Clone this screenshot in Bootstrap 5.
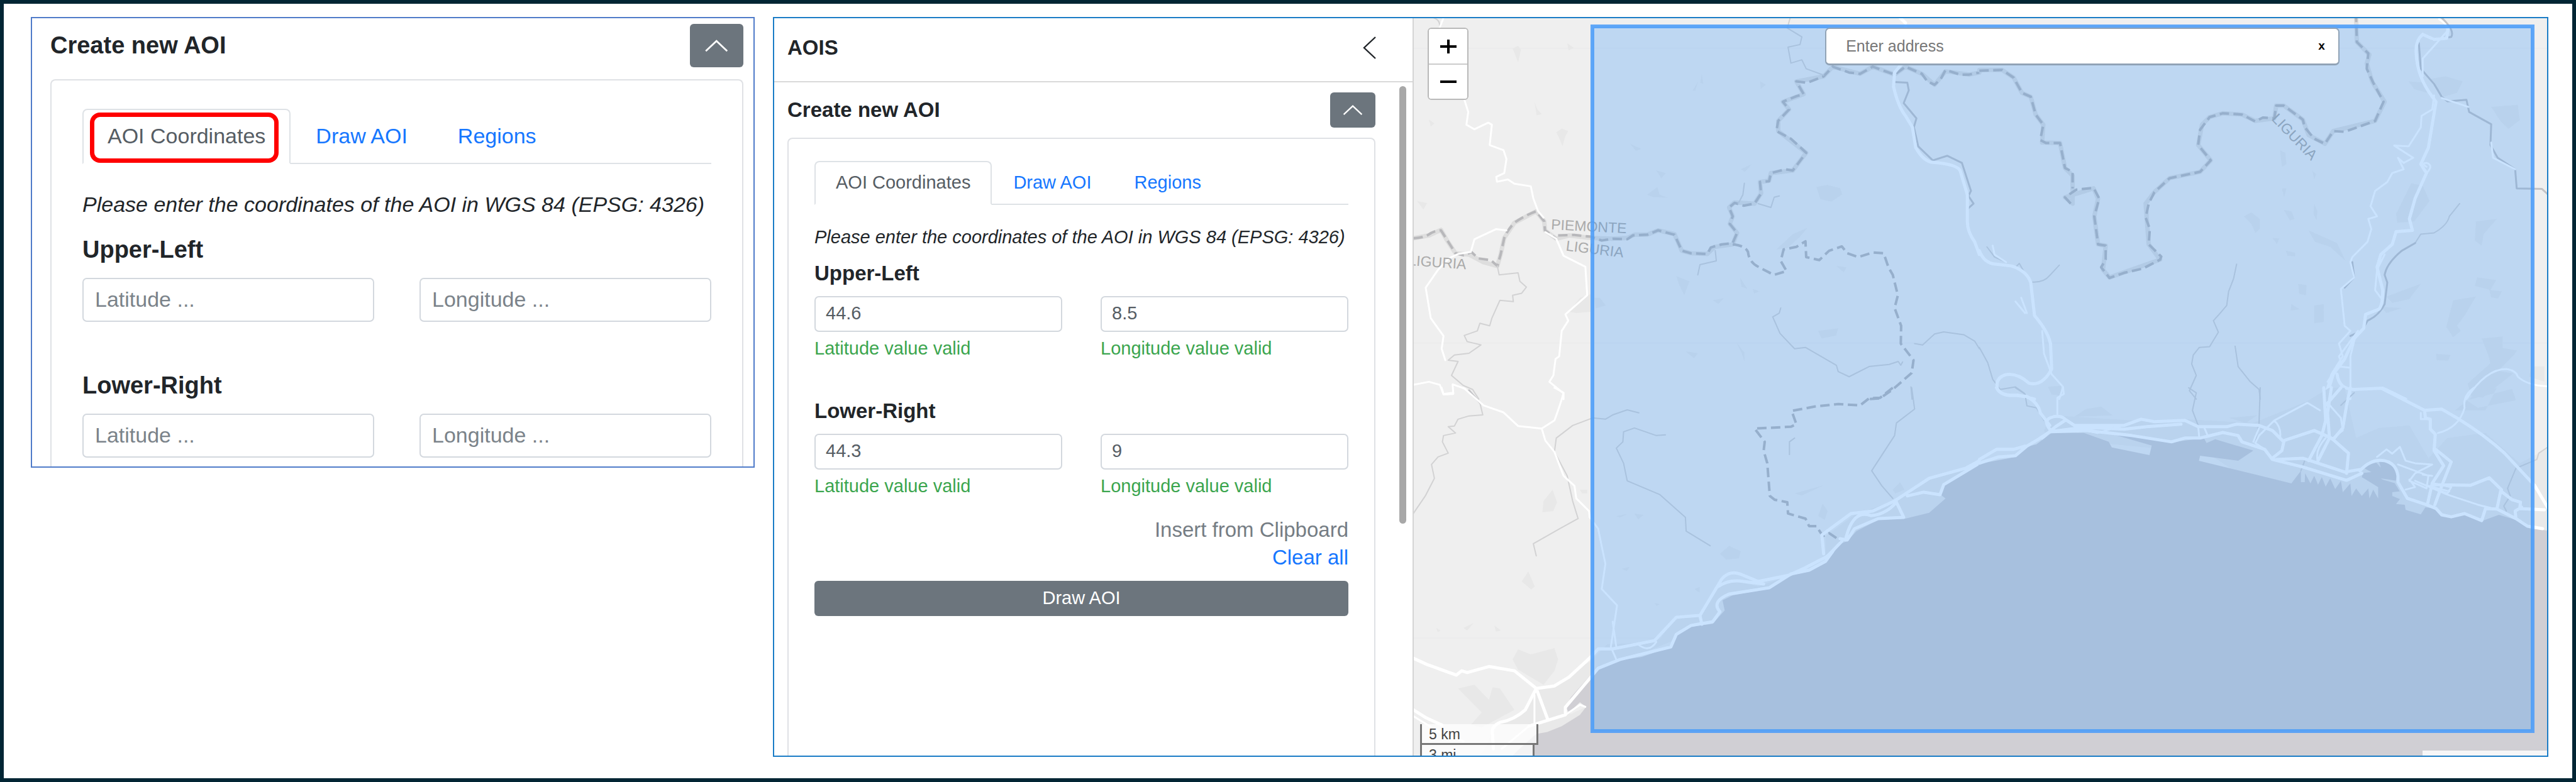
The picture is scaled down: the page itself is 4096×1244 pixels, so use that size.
<!DOCTYPE html>
<html lang="en">
<head>
<meta charset="utf-8">
<meta name="viewport" content="width=device-width, initial-scale=1">
<title>Create new AOI</title>
<link href="https://cdn.jsdelivr.net/npm/bootstrap@5.3.0/dist/css/bootstrap.min.css" rel="stylesheet">
<style>
body{font-family:"Liberation Sans",Arial,sans-serif;color:#212529;background:#fff}
.sheet{min-height:100vh;border:6px solid #022534;padding:21px 38px 34px 43px;column-gap:29px;grid-template-columns:minmax(0,1151fr) minmax(0,2823fr)}
.clip{border:2px solid #4f7bc9;padding:9px 16px 0 29px;overflow:hidden;
  --fs:34px;--hs:38px;--hl:46px;--bw:85px;--bh:69px;--cm:19px;--cp:45px 49px 14px;--tabh:88px;--tabp:38px;
  --il:50px;--im:39px;--h1:24px;--hg:22px;--ih:70px;--gap:72px;--ip:18px;--h2:78px}
.app{border:2px solid #1a7cc6;overflow:hidden;grid-template-columns:minmax(0,1017fr) minmax(0,1802fr);
  --fs:29px;--hs:33px;--hl:38px;--bw:72px;--bh:56px;--cm:16px;--cp:35px 41px 15px;--tabh:70px;--tabp:32px;
  --il:42px;--im:30px;--h1:18px;--hg:17px;--ih:57px;--gap:61px;--ip:16px;--h2:64px}
.ttl{font-size:var(--hs);line-height:var(--hl);font-weight:700;margin:0}
.clip-head .ttl{padding-top:11px}
.fold{width:var(--bw);height:var(--bh);background:#6c757d;border:0;border-radius:6px;padding:0}
.fold svg{width:50%;display:block;margin:auto}
.box{border:2px solid #dfe1e5;border-bottom:0;border-radius:8px 8px 0 0;margin-top:var(--cm);padding:var(--cp)}
.tabs{border-bottom:2px solid #dee2e6;height:var(--tabh);font-size:var(--fs)}
.tabs .nav-link{height:var(--tabh);border:2px solid transparent;margin:0;padding:0 var(--tabp);line-height:calc(var(--tabh) - 6px);border-radius:8px 8px 0 0;color:#1677ff}
.tabs .nav-link.active{color:#565d64;border-color:#dee2e6 #dee2e6 #fff;background:#fff}
.ring{position:absolute;inset:6px 19px 0 12px;border:7px solid #f00;border-radius:16px}
.note{font-style:italic;font-size:var(--fs);line-height:var(--il);margin:var(--im) 0 0;white-space:nowrap}
.h-a{margin-top:var(--h1)}
.h-b{margin-top:var(--h2)}
.pair{display:grid;grid-template-columns:1fr 1fr;column-gap:var(--gap);margin-top:var(--hg)}
.pair .form-control{height:var(--ih);font-size:var(--fs);line-height:var(--il);border:2px solid #d3d8de;border-radius:7px;padding:0 var(--ip) 2px;color:#565d64}
.pair .form-control::placeholder{color:#7b838a}
.ok{font-size:29px;line-height:34px;margin-top:9px;color:#3ba54e}
.side{border-right:2px solid #d4d4d4}
.bar{height:102px;border-bottom:2px solid #d9d9d9;padding:0 57px 6px 21px}
.back{border:0;background:none;padding:0;width:22px;height:36px;line-height:0}
.scroll{padding:16px 59px 0 21px;min-height:0}
.thumb{position:absolute;right:10px;top:6px;width:11px;height:65%;border-radius:6px;background:#a8a8a8}
.acts{font-size:33px;line-height:44px;margin-top:31px}
.acts a{color:#1677ff;text-decoration:none}
.acts .off{color:#757d84}
.go{background:#6c757d;color:#fff;font-size:29px;height:56px;line-height:40px;border:0;border-radius:6px;margin-top:15px;padding:0 0 2px}
.map{background:#efefef}
.chart{position:absolute;inset:0;width:100%;height:100%}
.chart path{fill:none;vector-effect:non-scaling-stroke;stroke-linejoin:round;stroke-linecap:round}
.chart path.sea{fill:#d0cfd4}
.chart path.port{fill:#e8e8e8}
.chart path.town{fill:#e9e9e9}
.chart path.spot{fill:#e8e8e8}
.chart path.r{stroke:#fff;stroke-width:3px}
.chart path.R{stroke:#fff;stroke-width:5px}
.chart path.w{stroke:#d2d2d3;stroke-width:2px}
.chart path.W{stroke:#c3c3c6;stroke-width:3px}
.chart path.e{stroke:#dedede;stroke-width:7px}
.chart path.b{stroke:#b8b8bb;stroke-width:4px;stroke-dasharray:15 7;stroke-linecap:butt}
.chart path.tile{stroke:#e9e9ea;stroke-width:1px}
.chart text{font-family:"Liberation Sans",Arial,sans-serif;font-size:23px;fill:#aaa}
.zoomer{position:absolute;left:22px;top:15px;width:65px;border:2px solid #b9b9b9;border-radius:6px;background:#fff;overflow:hidden}
.zoomer button{display:block;width:100%;height:55px;border:0;background:#fff;padding:0}
.zoomer button+button{border-top:2px solid #ccc;height:56px}
.zoomer svg{display:block;margin:auto}
.find{position:absolute;left:36.3%;width:45.4%;top:15px;height:60px;border:2px solid #91a3b6;border-bottom-width:3px;border-radius:7px;background:#fff;padding:0 18px 0 31px}
.find input{border:0;padding:0;font-size:25px;width:100%;outline:0;color:#333}
.find input::placeholder{color:#777}
.find button{border:0;background:none;padding:0;font-size:19px;font-weight:700;width:18px;color:#000}
.scale{position:absolute;left:10px;bottom:-16px;font-size:23px;line-height:33px;color:#444}
.scale div{border:3px solid #777;border-top:0;background:rgba(255,255,255,.75);padding-left:11px;height:33px}
.km{width:188px}.mi{width:182px}
.credit{position:absolute;right:0;bottom:0;width:11%;height:8px;background:rgba(255,255,255,.8)}
</style>
<script src="https://cdn.jsdelivr.net/npm/bootstrap@5.3.0/dist/js/bootstrap.bundle.min.js"></script>
</head>
<body>
<div class="sheet d-grid">

<section class="clip align-self-start">
  <div class="clip-head d-flex justify-content-between align-items-start">
    <h2 class="ttl">Create new AOI</h2>
    <button class="fold" type="button" aria-label="Collapse"><svg viewBox="0 0 40 22"><path d="M4 19 20 4 36 19" fill="none" stroke="#fff" stroke-width="2.6"/></svg></button>
  </div>
  <div class="box">
    <ul class="nav tabs flex-nowrap">
      <li class="nav-item position-relative"><a class="nav-link active" href="#">AOI Coordinates</a><span class="ring"></span></li>
      <li class="nav-item"><a class="nav-link" href="#">Draw AOI</a></li>
      <li class="nav-item"><a class="nav-link" href="#">Regions</a></li>
    </ul>
    <p class="note">Please enter the coordinates of the AOI in WGS 84 (EPSG: 4326)</p>
    <h3 class="ttl h-a">Upper-Left</h3>
    <div class="pair">
      <div><input class="form-control" aria-label="Upper-left latitude" placeholder="Latitude ..."></div>
      <div><input class="form-control" aria-label="Upper-left longitude" placeholder="Longitude ..."></div>
    </div>
    <h3 class="ttl h-b">Lower-Right</h3>
    <div class="pair">
      <div><input class="form-control" aria-label="Lower-right latitude" placeholder="Latitude ..."></div>
      <div><input class="form-control" aria-label="Lower-right longitude" placeholder="Longitude ..."></div>
    </div>
  </div>
</section>

<section class="app d-grid">
  <div class="side d-flex flex-column">
    <div class="bar d-flex justify-content-between align-items-center">
      <h1 class="ttl">AOIS</h1>
      <button class="back" type="button" aria-label="Back"><svg width="22" height="36" viewBox="0 0 22 36"><path d="M20 1 2 18 20 35" fill="none" stroke="#212529" stroke-width="2.4"/></svg></button>
    </div>
    <div class="scroll position-relative flex-grow-1 d-flex flex-column">
      <div class="d-flex justify-content-between align-items-center">
        <h2 class="ttl">Create new AOI</h2>
        <button class="fold" type="button" aria-label="Collapse"><svg viewBox="0 0 40 22"><path d="M4 19 20 4 36 19" fill="none" stroke="#fff" stroke-width="2.6"/></svg></button>
      </div>
      <div class="box flex-grow-1">
        <ul class="nav tabs flex-nowrap">
          <li class="nav-item"><a class="nav-link active" href="#">AOI Coordinates</a></li>
          <li class="nav-item"><a class="nav-link" href="#">Draw AOI</a></li>
          <li class="nav-item"><a class="nav-link" href="#">Regions</a></li>
        </ul>
        <p class="note">Please enter the coordinates of the AOI in WGS 84 (EPSG: 4326)</p>
        <h3 class="ttl h-a">Upper-Left</h3>
        <div class="pair">
          <div><input class="form-control" aria-label="Upper-left latitude" value="44.6"><div class="ok">Latitude value valid</div></div>
          <div><input class="form-control" aria-label="Upper-left longitude" value="8.5"><div class="ok">Longitude value valid</div></div>
        </div>
        <h3 class="ttl h-b">Lower-Right</h3>
        <div class="pair">
          <div><input class="form-control" aria-label="Lower-right latitude" value="44.3"><div class="ok">Latitude value valid</div></div>
          <div><input class="form-control" aria-label="Lower-right longitude" value="9"><div class="ok">Longitude value valid</div></div>
        </div>
        <div class="acts d-flex flex-column align-items-end"><a class="off" href="#">Insert from Clipboard</a><a href="#">Clear all</a></div>
        <button class="btn go w-100" type="button">Draw AOI</button>
      </div>
      <span class="thumb"></span>
    </div>
  </div>

  <div class="map position-relative overflow-hidden">
    <svg class="chart" viewBox="2248 29 1802 1173" preserveAspectRatio="xMidYMid slice" aria-hidden="true">
      <!-- north-west quarter -->
      <g transform="matrix(.57845 0 0 .4049 2240.3 0)">
        <path class="tile" d="M0 190H1570M0 1348H1570"/>
        <path class="spot" d="M285 190l15-10 8 15-8 50-8-30zM435 170l18 18-14 10zM345 400l8 30 12 18-14 5zM405 520l15-15 18 10-8 20-8 40-8-30zM22 790l28 8-10 25zM470 1170l30-15v70l-40 5-20-5zM55 470l15 15-10 12zM780 355l15-35-8 36zM805 290l4 40-8-5zM965 320l16 12-14 18zM608 565l30 20-14 8zM680 670l26 10-12 20zM655 765l28-30 6 30 22 12-40-3zM912 665l30-20-18 30zM1120 735l30-8 35 12 6 25-30 28-30-10zM1055 920l40-25-20 35-35 45-30 5zM735 1085l36 20-14 55-14-40zM910 1090l20 45-16-8zM835 1180l30-8-14 22zM945 1135l18 10-14 8zM1175 1045l28 5-8 20zM1125 1300l55-10-6 28-40 12zM760 1380l34 8-10 20zM900 1345l22 40v35l-8-35zM510 1170h15l16 30-28 12z"/>
        <path class="e" d="M12 936 55 925 88 903 105 945 128 995 165 1000 205 1030 243 1045 252 1000 262 935 290 875 350 830 372 870 374 905 405 938 440 925 500 935 560 938 600 935 620 922 655 922 685 905 730 920 750 985 775 995 820 998 840 970 890 960 902 915 882 880 890 850 880 815 895 795 950 800 968 760 965 715 990 710 995 680 1055 670 1092 600 1015 515 1015 475 1045 430 1028 400 1085 370 1065 320 1140 300 1165 262 1240 290 1275 262 1335 293 1365 262 1410 290 1445 333 1475 280 1540 293 1568 285"/>
        <path class="b" d="M12 936 Q35 935 50 925 70 905 88 905L108 950 128 995 150 1003 172 990 190 1015 225 1022 243 1045 252 1000 262 935Q270 905 290 875 320 845 350 830L372 870 374 905 405 938"/>
        <path class="b" d="M410 925 455 923 500 930 530 945 560 938 600 940 615 925 655 922 685 905 730 922 750 985 775 995 820 998 830 972 860 960 890 955 902 915 882 880 890 850 880 815 895 797 920 808 950 800 968 760 965 715 990 712 995 680 1035 665 1055 670 1092 600 1050 545 1010 515 1015 475 1045 430 1028 400 1065 378 1085 370 1065 320 1095 325 1140 300 1165 262 1210 285 1240 290 1275 262 1335 293 1365 262 1410 290 1425 320 1445 333 1462 310 1475 275 1515 293 1540 293 1568 285"/>
        <path class="b" d="M890 960 Q925 965 932 990 935 1030 960 1048L1003 1080 1038 1065 1022 1025 1030 980 1065 970 1090 948 1092 1010 1128 1022 1155 985 1190 968 1205 995 1235 1010 1275 992 1305 995 1318 1050 1330 1080 1344 1160 1335 1210 1353 1280 1352 1350 1387 1415 1382 1465 1330 1530 1295 1565 1260 1568"/>
        <path class="w" d="M68 70Q88 80 84 110M243 1045 248 1080 300 1072 305 1105 323 1128 310 1152 285 1160 287 1185 250 1180 228 1250 222 1280 195 1270 188 1300 152 1318 160 1342 198 1355 165 1388 125 1395 108 1415 135 1420 117 1475 150 1515 175 1530 192 1568"/>
        <path class="w" d="M1048 70 1040 110 1080 145 1075 175 1042 185 1050 248 1080 235 1092 270 1140 295M922 720 918 765 905 800M960 800 995 815 1004 775 1018 770M842 985 845 1025 800 1040 794 1080M1022 1210 1018 1230 1000 1245 1020 1310 1060 1370 1090 1365 1175 1435 1180 1460 1210 1480 1265 1440 1320 1432 1345 1420 1352 1435 1357 1422M1390 1350 1412 1355 1445 1312 1470 1304 1525 1315 1555 1340 1568 1370M1380 1520 1383 1568"/>
        <path class="W" d="M1335 322 1370 325 1374 355 1360 405 1395 465 1388 500 1400 575 1440 630 1480 612 1520 640 1545 750 1538 770 1552 800 1536 820"/>
        <path class="r" d="M84 110 95 70M152 390 163 440 158 490 180 508 218 482 228 490 222 570 260 590 268 625 262 680 240 695 242 714 272 705 290 722 335 732 342 780 355 830 370 855M375 912 405 938 425 1005 485 1048 490 1160 430 1235 438 1260 420 1300 413 1400 403 1410 397 1475 386 1500 425 1545 425 1568M268 905 240 900 180 940 170 990 135 998 110 1015 80 1060 46 1130 60 1250 95 1320 90 1370 100 1415M12 1512 55 1500 85 1512 95 1550 122 1548 120 1510 155 1528"/>
        <path class="R" d="M1350 70 1365 90M1365 108 1364 200 1355 250 1335 285 1332 340Q1345 420 1365 455L1384 500 1393 580Q1415 635 1440 638 1505 645 1515 670L1535 765V870Q1535 910 1555 950L1568 1000"/>
      </g>
      <!-- north-east quarter -->
      <g transform="matrix(.6051 0 0 .4049 3147.3 0)">
        <path class="tile" d="M0 190H1500M0 1348H1500"/>
        <path class="spot" d="M695 850l20-15 22 25v40l-12 15-10-35zM790 590l14 10 3 45-12 10zM800 825l20 5 8 30-12 6zM795 740h12l-6 35zM865 905l45 30 30 20 22 70-40-55-40-20zM770 935l18 2-6 22zM805 985l25 8v14l-20-2zM838 1115l22 5-2 40-18-6zM880 1200l25-5v70l-25 5zM875 670l10 15-5 20zM1128 320l45 5 5 40-35-15zM1185 310l40-10 45 20-15 45-35 15zM1345 420l70-8 5 60-30 35-20-30zM1305 870l55-10-35 60-5 45-18-20zM1308 1090l50 10-15 40 30 5-10 28-18-5-5-30-38-15zM1245 1180l60-15-30 75-20 40 10 20-20 25-18-40zM1320 1330l55-8v45l38 10-10 20-40 60 40 10-80 95-30-5-10-50 60-80-5-30zM1200 1390l38 5-6 22-30-2zM1070 1165l90-50-30 60-45 15zM1055 1205l55 5-40 20zM820 1195l22 20-24 5zM1095 840l40-120 30 10 18 60-40 80-45 5zM1450 1440h35v60l-40-20zM180 1520l35-5v40l-25-5zM880 800l8 30-2 35-8-25z"/>
        <path class="e" d="M0 275 60 275 90 305 112 365 135 380 148 450 168 490 165 560 212 562 225 660 245 690 245 800 225 775 300 740 312 780 302 850 312 960 332 965 325 1060 342 1090 475 1020 445 960 437 800 460 755 500 700 580 675 608 630 575 570 585 490 605 460 640 445 690 450 725 475 775 465 780 415 800 415 850 470 865 530 908 565 930 515 1040 475 1065 400 1032 320 1018 250 1025 215 992 165 990 70"/>
        <path class="b" d="M0 278 60 275 90 305 112 365 135 380 148 450 168 490 160 550 175 562 212 562 225 660 245 675 245 740"/>
        <path class="b" d="M240 800 225 775 255 745 300 738 315 780 302 850 312 960 332 965 332 1020 320 1050 342 1092 380 1072 430 1055 475 1020 478 1008 445 960 448 900 437 855 445 800 460 755 500 700 580 675 608 630 575 570 580 510 605 460 640 445 690 450 725 477 745 462 775 465 780 415 800 415 850 470 855 500 880 545 908 565 930 515 960 518 1040 475 1062 400 1035 325 1018 270 1022 210 992 165 990 70"/>
        <path class="w" d="M140 1108Q170 1110 185 1082L210 1042M95 1050 105 1035 120 1075M676 1038 668 1095 655 1145 650 1200 630 1235 615 1260 628 1305 605 1362 578 1365 562 1395 558 1430 570 1475 552 1535 570 1568M672 1360 680 1440 712 1500 735 1530 738 1568M1262 800 1235 850Q1230 885 1195 915L1160 920 1145 955M0 1365 22 1425 35 1490 55 1530 95 1520 118 1545M20 970 40 1010 70 1030"/>
        <path class="W" d="M1145 955 1110 985Q1070 1035 1065 1080L1072 1110 1065 1195Q1050 1240 1020 1260L1005 1300 975 1320M1155 170 1160 270 1195 330 1215 380 1230 398 1280 392 1287 440 1345 488 1343 570 1362 620 1408 665 1412 740 1478 742 1495 765M1215 70Q1250 120 1240 145L1190 155M980 1030 985 1090 960 1130"/>
        <path class="r" d="M1208 75Q1235 100 1228 125L1195 180 1165 230 1165 300M1215 385 1285 420M1345 560 1350 620 1408 665M1195 375 1190 430 1162 455 1160 500 1128 575 1090 572 1140 620 1115 640 1100 620 1115 665 1085 680 1072 715 1040 750 1028 810 1045 850 1022 860 1030 900 1020 950 980 1010 975 1030 985 1090 950 1135 960 1280 975 1300 945 1350 955 1400 925 1470 905 1568M35 965 40 1000 70 1030M95 1185 120 1230M110 1170 125 1230M165 1300 170 1390 190 1470 220 1520 210 1568M1175 655Q1160 640 1175 640 1195 650 1175 680M1065 1000 1045 1060 1040 1140 1055 1170M990 1310 975 1400V1568M995 1300 945 1400 950 1420 915 1500M1280 1568Q1330 1450 1385 1450 1410 1455 1415 1480 1440 1515 1495 1518M945 1440 975 1445"/>
        <path class="R" d="M1165 135 1195 155 1228 150 1232 110M1165 135Q1145 160 1148 210 1150 300 1190 380L1200 400 1180 580 1160 645 1175 680 1145 780 1130 860 1138 905 1095 910 1085 960 1055 1000 1045 1050 1060 1140Q1060 1200 1050 1215L1015 1235 1010 1290 985 1330 960 1410 930 1470 910 1568M0 985Q12 1035 45 1038L85 1045Q125 1065 135 1110L145 1240Q180 1300 187 1350L190 1450Q165 1520 130 1505 100 1465 70 1472 40 1485 48 1530 60 1560 100 1552L145 1568M940 1470Q945 1530 985 1530L1060 1525 1120 1568"/>
      </g>
      <!-- south-west quarter -->
      <g transform="matrix(.57845 0 0 .4003 2240.3 616.8)">
        <path class="tile" d="M0 995H1570"/>
        <path class="spot" d="M285 1080 300 1040 335 1060 400 1035 410 1080 400 1125 370 1180 300 1120ZM135 1195 180 1180 220 1240 230 1190 250 1195 290 1280 200 1350 170 1340 200 1290ZM370 450l25-45 12 50-10 35-30 5zM310 770l18-40 18 60-10 12zM150 955l28-20-18 30zM235 945l18 20-14 4zM75 955l12 10-8 6zM470 405h20v15h-14zM1060 420l80-32-60 40zM1125 510l12-50 14 30-8 35zM1330 405l20-30 12 30-25 15zM855 660l25-32 32 22-5 28-35 5zM585 720l22-8-8 16zM785 800l14-8v22zM675 855l14 5-8 8zM570 510l30-8-20 14zM620 500l25 5-15 18z"/>
        <path class="town" d="M200 1468 240 1330 320 1290 345 1200 400 1180 500 1085 545 1020 620 1015 690 1000 725 925 805 900 860 770 900 770 960 790 1060 740 1145 670 1145 590 1230 500 1335 450 1440 360 1568 300V520H1300L1000 800 735 1000 500 1140 430 1330 300 1420Z"/>
        <path class="sea" d="M250 1400 300 1390 355 1372 400 1355 440 1320 465 1300 487 1268 470 1250 440 1290 430 1270 445 1230 511 1122 570 1085 640 1070 722 1030 735 985 775 950 835 938 868 885 862 845 890 825 990 798 1050 745 1100 730 1150 690 1185 620 1205 610 1230 570 1290 525 1365 520 1430 497 1475 440 1462 425 1470 390 1530 338 1570 303V1470H200Z"/>
        <path class="town" d="M190 1470 240 1380 360 1340 440 1300 487 1268 470 1300 420 1345 380 1368 350 1376 300 1440 280 1470Z"/>
        <path class="w" d="M150 0 195 60 203 108 165 112 135 125 125 152 108 155 128 180 95 190 92 215 108 260 80 275 62 305 70 360 45 430 12 500M632 100 600 88 560 108 540 125 505 120 450 150 405 200 400 255 435 350 450 450 465 520 415 560 342 620 350 668M705 187 680 190 620 160 590 175 588 215 570 240 590 300 600 370 690 425 760 515 762 570 828 628M1060 200 1046 215V265M1382 0 1390 85 1340 140 1335 190 1272 330 1300 390 1330 440"/>
        <path class="W" d="M165 10 195 60"/>
        <path class="b" d="M1330 0 1295 40 1265 42 1240 70 1180 65 1115 75 1052 92 1065 145 1050 155 950 162 978 215 975 250 985 300 992 430 1005 445 1040 455 1042 500 1090 520 1100 550 1120 550 1138 590 1155 578 1190 612"/>
        <path class="r" d="M90 0 95 25 122 20M150 0 205 70 260 98 300 152 365 162 400 130Q420 50 425 20L400 0M365 162 375 210 400 255 425 350 455 390 460 440 495 490 497 515 520 560 540 700 530 800 572 865 555 1030 570 1080M12 1305 85 1370 150 1405M345 1220 345 1330M255 1435 330 1345M630 1020Q660 1055 680 1010M570 1030 560 930"/>
        <path class="R" d="M12 1075 50 1100 130 1142 145 1125 160 1132 220 1108 290 1125 350 1195 382 1320M12 1280 45 1310 90 1340M350 1195 320 1280Q290 1320 250 1330 225 1345 230 1380L232 1435M350 1195 400 1185 440 1150 500 1070 520 1038 560 1038 675 1005 735 912 800 905 805 940M800 905 860 760Q880 725 910 740L960 770 1045 745 1090 715 1150 670 1190 610M850 790Q880 760 920 770L975 780M330 1345 430 1300 430 1270 500 1150 520 1115 580 1080 720 1030 735 980 775 945 835 930 855 890Q830 850 880 820L990 795 1050 740 1100 725 1145 690 1165 650M1140 660 1135 585 1215 500 1275 490 1335 450 1430 360 1530 320 1568 290M1200 605Q1220 480 1270 508 1310 505 1340 455L1360 515 1290 520 1225 560 1205 605 1185 600M1370 430 1415 415 1460 425 1470 385 1568 300"/>
        <path class="r" d="M430 1300 470 1260 485 1268"/>
      </g>
      <!-- south-east quarter -->
      <g transform="matrix(.6051 0 0 .4003 3147.3 616.8)">
        <path class="tile" d="M0 995H1500"/>
        <path class="town" d="M170 170 190 110 400 130 540 125 720 140 860 55 920 0H960L990 200 1050 160 1130 150 1180 280 1230 200 1330 180 1420 300 1495 240V590L1300 560 1000 480 700 360 600 260 180 200Z"/>
        <path class="spot" d="M250 115 280 85 320 75 350 110ZM655 120 730 110 700 140ZM1280 50 1400 5 1410 50 1310 80ZM1360 0 1300 30 1250 90 1330 90Z"/>
        <path class="sea" d="M-2 303 95 275 125 235 150 225 190 180 275 180 340 215 348 237 447 268 453 230 350 185 400 192 505 217 590 200 597 220 620 205 720 250 680 290 580 270 577 290 820 380 845 330V375H855L856 340 870 380 880 350 890 385 900 355 910 393 922 360 935 403 950 370 955 415 975 380 978 430 990 400 1005 430 1022 400 1025 440 1035 405 1048 440V395L1005 355 1012 320 1025 305 1060 290 1090 315 1098 350 1092 380 1112 430 1095 462 1118 465 1120 485 1160 503 1172 475 1200 480 1212 508 1240 515 1275 502 1320 530 1365 505 1410 525 1445 558 1495 568V1470H-2Z"/>
        <path class="port" d="M1055 360 1098 370V382L1060 365ZM1000 340 1030 335 1012 320ZM1085 415 1115 410 1110 445 1085 430ZM1050 292 1055 318 1042 296Z"/>
        <path class="w" d="M95 0 120 25 125 72 150 80 170 130M550 0 570 20 560 90 575 150M738 0 735 140 725 220M1495 235 1470 260 1465 285 1410 320 1388 400 1395 430 1378 470 1385 490M950 70 985 20M855 290 845 330"/>
        <path class="r" d="M220 0 222 25 205 40V105M250 160 310 180 400 140M575 155 578 200M590 155 600 190M1300 0Q1270 30 1275 80 1260 160 1205 180M895 90 862 60 775 130 735 190 725 220 745 240M775 130Q795 160 790 200M890 295Q880 250 910 200M915 60 950 120 955 170 925 205M735 160 720 215M1045 275 1070 245 1085 262 1105 235 1120 290 1145 300 1190 305 1145 340 1130 370 1175 400 1180 350 1100 305M1165 345 1190 350M1130 365 1145 395 1120 405M1145 370 1230 425 1310 465 1350 480M1195 380 1240 395 1230 420 1190 400M1180 390 1235 412M1160 100V125L1185 125"/>
        <path class="R" d="M45 0Q55 30 90 30L125 35Q155 60 160 100L185 150M0 300 50 275 95 270 125 232 155 205 185 175 260 160 310 160 380 165 440 155 530 145M0 285 45 245 90 245 120 232M185 165Q165 125 195 115 215 110 225 125L250 150 380 150 425 125 460 135 540 130 575 155 650 155 675 145 735 150 770 170 800 215 795 250 770 280M165 200 200 155 225 130M190 175 280 170 400 190 505 215 540 200 580 200 640 178 680 190 690 215 750 245 770 285 850 315 965 368 1005 340M800 210 880 170 925 200 970 260 965 340M780 285 850 280 960 335 1000 325M865 290 900 190 910 130 905 0M890 290 920 200 915 100 925 0M975 0 965 70 955 160 930 205M950 0 910 70M1000 330Q1030 280 1065 290 1095 300 1100 350L1100 375 1125 440 1175 465 1200 480 1215 505 1240 513 1275 500 1320 528 1330 480 1360 482 1370 410 1400 445 1422 455 1420 480 1485 485M1060 5 1170 90 1215 85 1255 120Q1330 190 1380 260L1460 390 1495 480M1170 90 1172 120 1185 125V165L1198 185 1195 250 1220 310 1190 380 1178 460M1195 240 1240 295 1215 390 1197 465M1190 385 1290 388 1340 358 1372 405M1360 482 1410 520 1408 490 1425 475M1410 520 1440 550 1480 560"/>
      </g>
      <g text-anchor="middle">
        <text transform="translate(2285 425) rotate(4)">LIGURIA</text>
        <text transform="translate(2526 368) rotate(3)">PIEMONTE</text>
        <text transform="translate(2535 404) rotate(7)">LIGURIA</text>
        <text transform="translate(3643 223) rotate(46)">LIGURIA</text>
      </g>
      <rect x="2532" y="42" width="1495" height="1121" fill="#3c96fd" fill-opacity=".27" stroke="#4c9df8" stroke-opacity=".88" stroke-width="6"/>
    </svg>
    <div class="zoomer">
      <button type="button" aria-label="Zoom in"><svg width="26" height="24" viewBox="0 0 26 24"><path d="M0 12H26M13 1V23" stroke="#000" stroke-width="4" fill="none"/></svg></button>
      <button type="button" aria-label="Zoom out"><svg width="26" height="24" viewBox="0 0 26 24"><path d="M0 12H26" stroke="#000" stroke-width="4" fill="none"/></svg></button>
    </div>
    <div class="find d-flex align-items-center">
      <input type="text" aria-label="Address" placeholder="Enter address"><button type="button">x</button>
    </div>
    <div class="scale"><div class="km">5 km</div><div class="mi">3 mi</div></div>
    <div class="credit"></div>
  </div>
</section>
</div>
</body>
</html>
